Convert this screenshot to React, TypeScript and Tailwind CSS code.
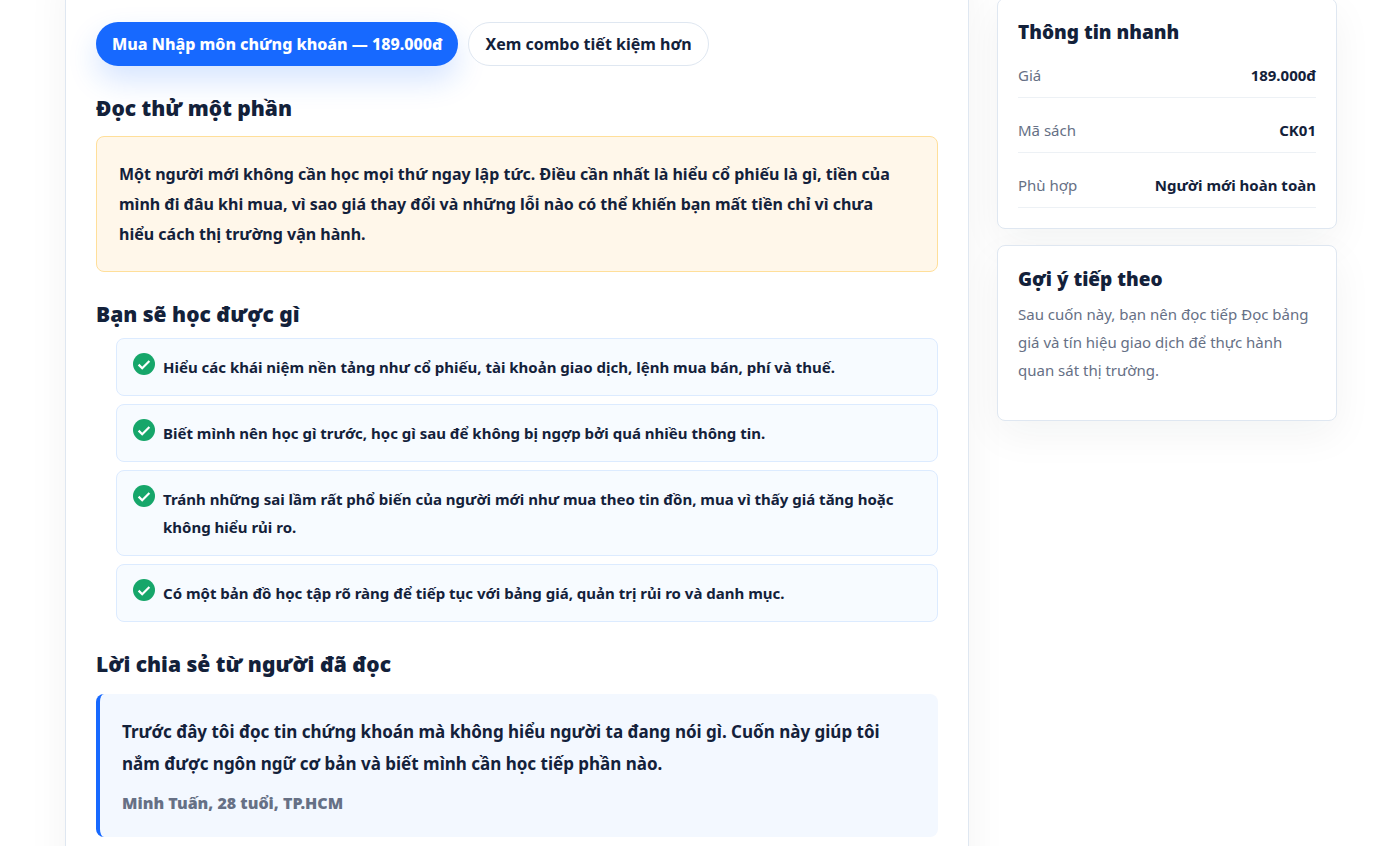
const facts = [
  { label: "Giá", value: "189.000đ" },
  { label: "Mã sách", value: "CK01" },
  { label: "Phù hợp", value: "Người mới hoàn toàn" },
];

const lessons = [
  "Hiểu các khái niệm nền tảng như cổ phiếu, tài khoản giao dịch, lệnh mua bán, phí và thuế.",
  "Biết mình nên học gì trước, học gì sau để không bị ngợp bởi quá nhiều thông tin.",
  "Tránh những sai lầm rất phổ biến của người mới như mua theo tin đồn, mua vì thấy giá tăng hoặc không hiểu rủi ro.",
  "Có một bản đồ học tập rõ ràng để tiếp tục với bảng giá, quản trị rủi ro và danh mục.",
];

function CheckIcon() {
  return (
    <svg viewBox="0 0 22 22" className="size-[22px] shrink-0" aria-hidden="true">
      <circle cx="11" cy="11" r="11" fill="#16a66a" />
      <path d="M5.6 11.6 9.2 15.2 16.4 8" fill="none" stroke="#fff" strokeWidth="2.2" />
    </svg>
  );
}

function BookDetail() {
  return (
    <article className="-mt-10 min-w-0 flex-1 border border-[#dfe7f1] bg-white px-[30px] pt-[61px] pb-16 shadow-[0_14px_40px_rgba(15,40,35,0.05)]">
      <div className="flex flex-wrap gap-2.5">
        <a
          href="#mua"
          className="flex h-11 items-center rounded-full bg-[#1769ff] px-4 text-[16px] font-extrabold text-white shadow-[0_14px_30px_rgba(23,105,255,0.18)]"
        >
          Mua Nhập môn chứng khoán — 189.000đ
        </a>
        <a
          href="#combo"
          className="flex h-11 items-center rounded-full border border-[#dfe7f1] bg-white px-4 text-[16px] font-bold"
        >
          Xem combo tiết kiệm hơn
        </a>
      </div>

      <h2 className="mt-[26px] text-[21px] leading-8 font-black">Đọc thử một phần</h2>
      <p className="mt-3 rounded-lg border border-[#ffdf9a] bg-[#fff7ea] py-[22px] pr-[30px] pl-[22px] text-[16px] leading-[30px] font-bold">
        Một người mới không cần học mọi thứ ngay lập tức. Điều cần nhất là hiểu cổ phiếu là gì, tiền của mình đi đâu
        khi mua, vì sao giá thay đổi và những lỗi nào có thể khiến bạn mất tiền chỉ vì chưa hiểu cách thị trường vận
        hành.
      </p>

      <h2 className="mt-[26px] text-[21px] leading-8 font-black">Bạn sẽ học được gì</h2>
      <ul className="mt-2 space-y-2 pl-5">
        {lessons.map((lesson) => (
          <li
            key={lesson}
            className="flex items-start gap-2 rounded-lg border border-[#dcebff] bg-[#f7fbff] px-4 py-3.5 text-[15px] leading-7 font-bold"
          >
            <CheckIcon />
            <span>{lesson}</span>
          </li>
        ))}
      </ul>

      <h2 className="mt-[26px] text-[21px] leading-8 font-black">Lời chia sẻ từ người đã đọc</h2>
      <blockquote className="mt-3.5 rounded-lg border-l-4 border-[#1769ff] bg-[#f3f8ff] p-[22px]">
        <p className="text-[17px] leading-8 font-bold">
          Trước đây tôi đọc tin chứng khoán mà không hiểu người ta đang nói gì. Cuốn này giúp tôi nắm được ngôn ngữ cơ
          bản và biết mình cần học tiếp phần nào.
        </p>
        <cite className="mt-3 block text-[16px] leading-[23px] font-black text-[#667085] not-italic">
          Minh Tuấn, 28 tuổi, TP.HCM
        </cite>
      </blockquote>
    </article>
  );
}

function Sidebar() {
  return (
    <aside className="-mt-0.5 w-[340px] shrink-0 space-y-4">
      <section className="rounded-lg border border-[#dfe7f1] bg-white p-5 shadow-[0_14px_40px_rgba(15,40,35,0.05)]">
        <h3 className="text-[19px] leading-[26px] font-black">Thông tin nhanh</h3>
        <dl className="mt-2 space-y-2.5">
          {facts.map((fact) => (
            <div
              key={fact.label}
              className="flex justify-between gap-3 border-b border-[#edf1f5] py-2 text-[15px] leading-7"
            >
              <dt className="text-[#667085]">{fact.label}</dt>
              <dd className="text-right font-bold">{fact.value}</dd>
            </div>
          ))}
        </dl>
      </section>

      <section className="rounded-lg border border-[#dfe7f1] bg-white p-5 shadow-[0_14px_40px_rgba(15,40,35,0.05)]">
        <h3 className="text-[19px] leading-[26px] font-black">Gợi ý tiếp theo</h3>
        <p className="mt-2 mb-4 text-[15px] leading-7 text-[#667085]">
          Sau cuốn này, bạn nên đọc tiếp Đọc bảng giá và tín hiệu giao dịch để thực hành quan sát thị trường.
        </p>
      </section>
    </aside>
  );
}

export default function App() {
  return (
    <main className="flex h-screen items-start gap-7 overflow-hidden bg-white pr-[61px] pl-[65px] font-['Noto_Sans',sans-serif] text-[#13213a]">
      <BookDetail />
      <Sidebar />
    </main>
  );
}
